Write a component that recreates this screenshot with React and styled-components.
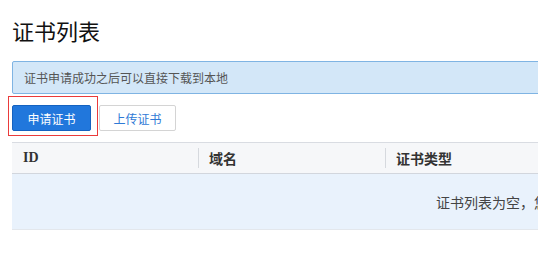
import React from "react";
import styled, { createGlobalStyle } from "styled-components";

const GlobalStyle = createGlobalStyle`
  html, body {
    margin: 0;
    padding: 0;
    background: #fff;
    overflow: hidden;
  }
  body {
    font-family: "Noto Sans CJK SC", "Liberation Sans", sans-serif;
    color: #333;
  }
`;

const Page = styled.div`
  width: 1100px;
  padding: 15px 0 0 12px;
`;

const Title = styled.h1`
  margin: 0;
  font-size: 22px;
  font-weight: normal;
  line-height: 30px;
  color: #111;
`;

const Alert = styled.div`
  margin-top: 16px;
  height: 31px;
  line-height: 31px;
  padding: 0 11px;
  background: #d3e7f8;
  border: 1px solid #7fb4e3;
  border-radius: 2px;
  font-size: 12px;
  color: #555;
`;

const Toolbar = styled.div`
  position: relative;
  display: flex;
  gap: 8px;
  margin-top: 11px;
`;

const Highlight = styled.div`
  position: absolute;
  left: -4px;
  top: -9px;
  width: 88px;
  height: 38px;
  border: 1px solid #ea3b3b;
  pointer-events: none;
`;

const Button = styled.button`
  height: 26px;
  padding: 0;
  width: ${(p) => p.w}px;
  font-family: inherit;
  font-size: 12px;
  border-radius: 2px;
  cursor: pointer;
  background: ${(p) => (p.primary ? "#2177dc" : "#fff")};
  color: ${(p) => (p.primary ? "#fff" : "#2f7ad6")};
  border: 1px solid ${(p) => (p.primary ? "#1462c0" : "#d4d4d4")};
`;

const Table = styled.div`
  margin-top: 11px;
`;

const HeadRow = styled.div`
  display: grid;
  grid-template-columns: 186px 187px 187px 1fr;
  height: 30px;
  background: #f6f7f9;
  border-top: 1px solid #d9dce2;
  border-bottom: 1px solid #d2d6dd;
`;

const HeadCell = styled.div`
  position: relative;
  display: flex;
  align-items: center;
  padding-left: 11px;
  font-family: "Liberation Serif", "Noto Sans CJK SC", serif;
  font-weight: bold;
  font-size: 14px;
  color: #333;

  & + &::before {
    content: "";
    position: absolute;
    left: 0;
    top: 5px;
    bottom: 5px;
    width: 1px;
    background: #d6d9de;
  }
`;

const EmptyRow = styled.div`
  height: 55px;
  background: #e9f2fc;
  border-bottom: 1px solid #e3e7ec;
  display: flex;
  align-items: center;
  padding-left: 424px;
  font-size: 14px;
  color: #444;
  white-space: nowrap;
`;

export default function App() {
  return (
    <>
      <GlobalStyle />
      <Page>
        <Title>证书列表</Title>
        <Alert>证书申请成功之后可以直接下载到本地</Alert>
        <Toolbar>
          <Button primary w={79}>
            申请证书
          </Button>
          <Button w={77}>上传证书</Button>
          <Highlight />
        </Toolbar>
        <Table>
          <HeadRow>
            <HeadCell>ID</HeadCell>
            <HeadCell>域名</HeadCell>
            <HeadCell>证书类型</HeadCell>
            <HeadCell>状态</HeadCell>
          </HeadRow>
          <EmptyRow>证书列表为空，您可以点击申请证书按钮申请证书</EmptyRow>
        </Table>
      </Page>
    </>
  );
}
